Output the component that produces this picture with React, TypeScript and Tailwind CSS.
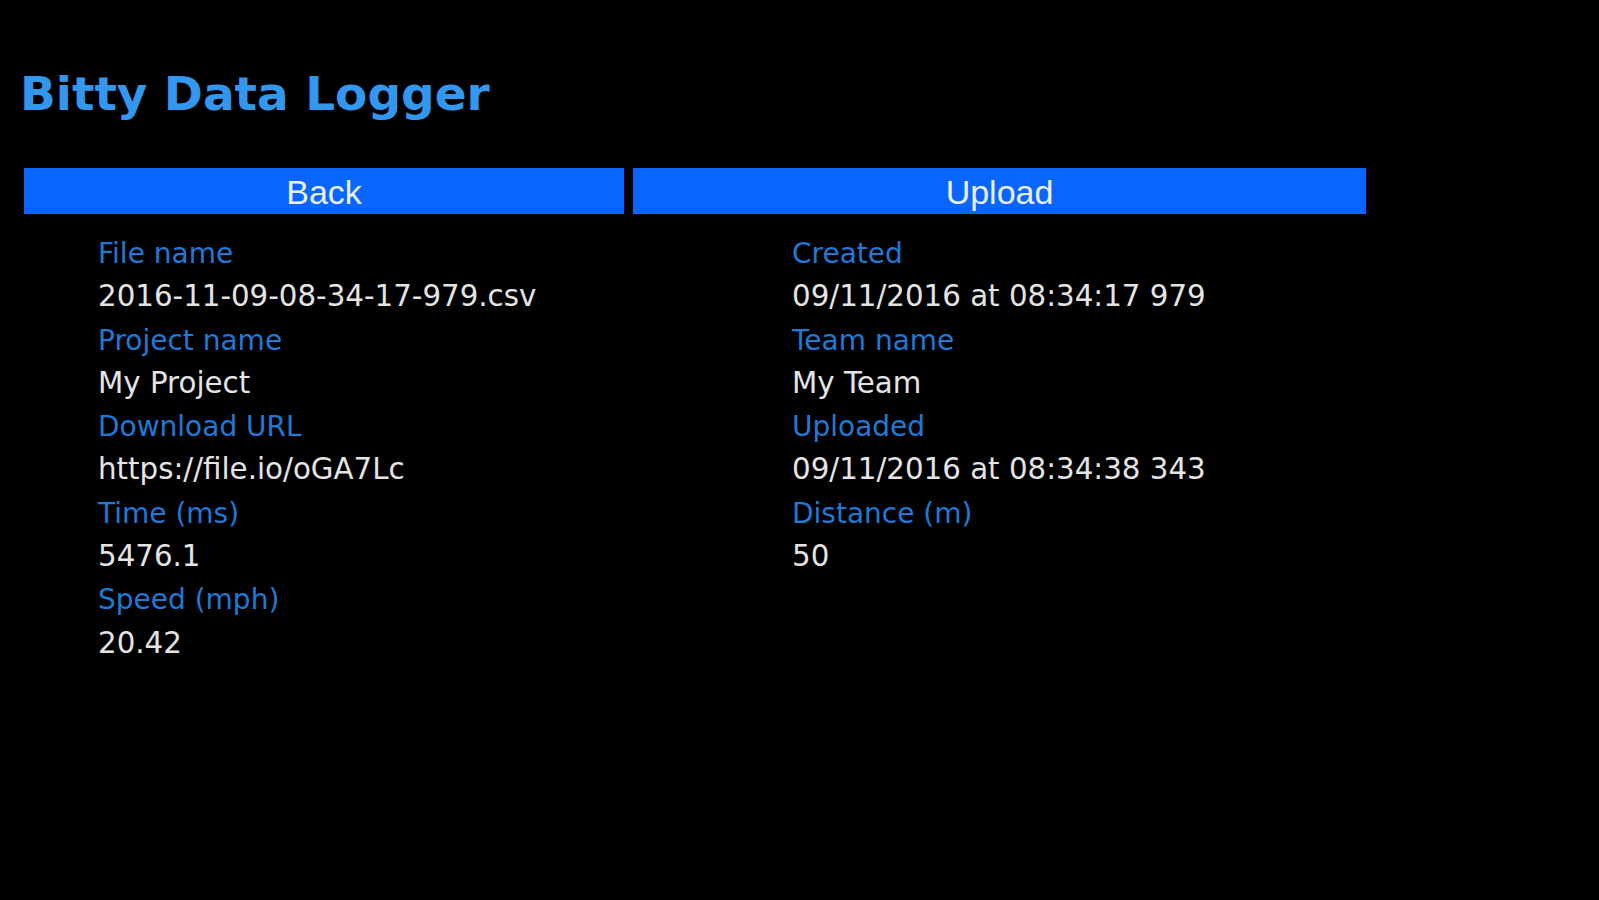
const left = [
  ["File name", "2016-11-09-08-34-17-979.csv"],
  ["Project name", "My Project"],
  ["Download URL", "https://file.io/oGA7Lc"],
  ["Time (ms)", "5476.1"],
  ["Speed (mph)", "20.42"],
];

const right = [
  ["Created", "09/11/2016 at 08:34:17 979"],
  ["Team name", "My Team"],
  ["Uploaded", "09/11/2016 at 08:34:38 343"],
  ["Distance (m)", "50"],
];

function Field({ label, value }: { label: string; value: string }) {
  return (
    <>
      <div className="text-[28px] text-[#1f7ad6]">{label}</div>
      <div className="text-[#e4e4e4]">{value}</div>
    </>
  );
}

export default function App() {
  return (
    <div className="h-[900px] w-full overflow-hidden bg-black">
      <h1 className="pl-[20px] pt-[70px] font-['DejaVu_Sans',sans-serif] text-[47px] font-bold leading-[47px] text-[#3397ee]">
        Bitty Data Logger
      </h1>

      <div className="ml-[24px] mt-[51px] flex gap-[9px] font-['Liberation_Sans',Arial,sans-serif] text-[34px] text-[#eaf0ff]">
        <div className="flex h-[46px] w-[600px] items-center justify-center bg-[#0866ff] pt-[3px]">Back</div>
        <div className="flex h-[46px] w-[733px] items-center justify-center bg-[#0866ff] pt-[3px]">Upload</div>
      </div>

      <div className="mt-[18px] grid grid-cols-[694px_1fr] pl-[98px] font-['DejaVu_Sans',sans-serif] text-[29.3px] leading-[43.3px]">
        <div className="flex flex-col">
          {left.map(([l, v]) => (
            <Field key={l} label={l} value={v} />
          ))}
        </div>
        <div className="flex flex-col">
          {right.map(([l, v]) => (
            <Field key={l} label={l} value={v} />
          ))}
        </div>
      </div>
    </div>
  );
}
